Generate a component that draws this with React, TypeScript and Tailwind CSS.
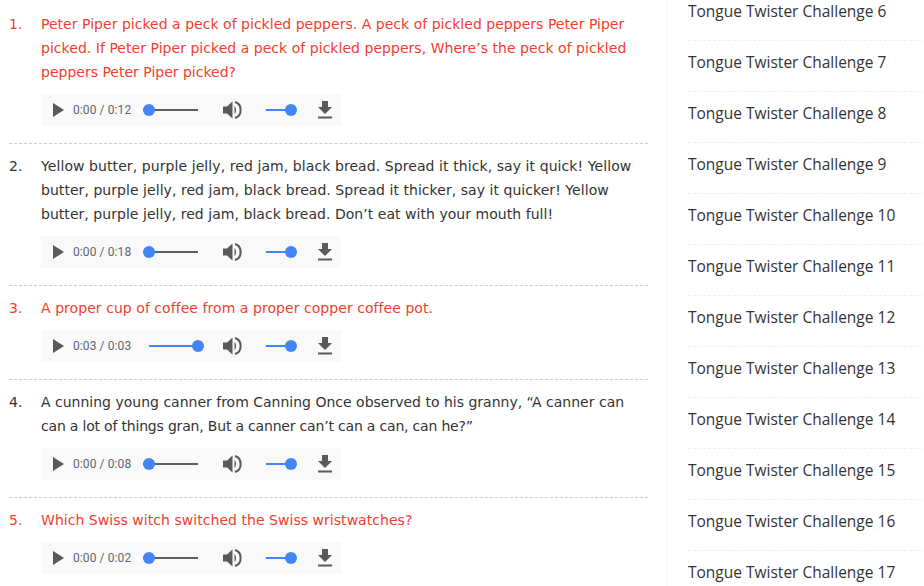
const items = [
  {
    n: 1,
    red: true,
    lines: [
      { t: "Peter Piper picked a peck of pickled peppers. A peck of pickled peppers Peter Piper", c: "tracking-[0.024px]" },
      { t: "picked. If Peter Piper picked a peck of pickled peppers, Where’s the peck of pickled", c: "tracking-[0.036px]" },
      { t: "peppers Peter Piper picked?", c: "" },
    ],
    time: "0:00 / 0:12",
    done: false,
  },
  {
    n: 2,
    red: false,
    lines: [
      { t: "Yellow butter, purple jelly, red jam, black bread. Spread it thick, say it quick! Yellow", c: "tracking-[0.08px]" },
      { t: "butter, purple jelly, red jam, black bread. Spread it thicker, say it quicker! Yellow", c: "tracking-[0.05px]" },
      { t: "butter, purple jelly, red jam, black bread. Don’t eat with your mouth full!", c: "tracking-[0.04px]" },
    ],
    time: "0:00 / 0:18",
    done: false,
  },
  {
    n: 3,
    red: true,
    lines: [{ t: "A proper cup of coffee from a proper copper coffee pot.", c: "tracking-[0.055px]" }],
    time: "0:03 / 0:03",
    done: true,
  },
  {
    n: 4,
    red: false,
    lines: [
      { t: "A cunning young canner from Canning Once observed to his granny, “A canner can", c: "" },
      { t: "can a lot of things gran, But a canner can’t can a can, can he?”", c: "tracking-[-0.19px]" },
    ],
    time: "0:00 / 0:08",
    done: false,
  },
  {
    n: 5,
    red: true,
    lines: [{ t: "Which Swiss witch switched the Swiss wristwatches?", c: "tracking-[0.04px]" }],
    time: "0:00 / 0:02",
    done: false,
  },
];

const challenges = [6, 7, 8, 9, 10, 11, 12, 13, 14, 15, 16, 17];

const AudioBar = ({ time, done }: { time: string; done: boolean }) => (
  <div className="flex items-center h-8 w-[300px] bg-[#f9f9f9] mt-[10px]">
    <svg className="ml-3 shrink-0" width="11" height="14" viewBox="0 0 11 14">
      <path d="M0 0L11 7L0 14Z" fill="#5a5a5a" />
    </svg>
    <span className="ml-[9px] w-[58px] shrink-0 text-[12px] tracking-[0.1px] text-[#5f6672] whitespace-nowrap font-['Roboto',sans-serif]">
      {time}
    </span>
    <div className={done ? "ml-[18px] w-[55px] shrink-0 relative h-3 flex items-center" : "ml-3 w-[55px] shrink-0 relative h-3 flex items-center"}>
      <div className={done ? "h-[2px] w-full bg-[#4285f4]" : "h-[2px] w-full bg-[#5f5f5f]"} />
      <div className={done ? "absolute right-0 w-3 h-3 rounded-full bg-[#4285f4]" : "absolute left-0 w-3 h-3 rounded-full bg-[#4285f4]"} />
    </div>
    <svg className={done ? "ml-[19px] shrink-0" : "ml-[25px] shrink-0"} width="19" height="20" viewBox="0 0 19 20">
      <path d="M0 6.5H4L9.5 1.5V18.5L4 13.5H0Z" fill="#5a5a5a" />
      <path d="M11.5 6C13.5 7.5 13.5 12.5 11.5 14Z" fill="#5a5a5a" />
      <path d="M12 2C19.5 4 19.5 16 12 18" fill="none" stroke="#5a5a5a" strokeWidth="2" />
    </svg>
    <div className="ml-[24px] w-[31px] shrink-0 relative h-3 flex items-center">
      <div className="h-[2px] w-[20px] bg-[#4285f4]" />
      <div className="absolute right-0 w-3 h-3 rounded-full bg-[#4285f4]" />
    </div>
    <svg className="ml-[21px] shrink-0" width="14" height="18" viewBox="0 0 14 18">
      <path d="M4 0H10V6H14L7 13L0 6H4Z" fill="#5a5a5a" />
      <rect x="0" y="15.5" width="14" height="2" fill="#5a5a5a" />
    </svg>
  </div>
);

export default function App() {
  return (
    <div className="h-[586px] w-[924px] overflow-hidden bg-white flex font-['DejaVu_Sans',sans-serif]">
      <div className="w-[667px] shrink-0 pl-[9px] pt-[12px]">
        {items.map((item, i) => (
          <div
            key={item.n}
            className={i === items.length - 1 ? "" : "border-b border-dashed border-[#cccccc] mb-[10px] pb-[17px] w-[639px]"}
          >
            <div className="flex">
              <div className={item.red ? "w-8 shrink-0 text-[14px] leading-6 text-[#f0402f]" : "w-8 shrink-0 text-[14px] leading-6 text-[#333333]"}>
                {item.n}.
              </div>
              <div>
                {item.lines.map((l) => (
                  <div
                    key={l.t}
                    className={`text-[14px] leading-6 whitespace-nowrap ${item.red ? "text-[#f0402f]" : "text-[#333333]"} ${l.c}`}
                  >
                    {l.t}
                  </div>
                ))}
                <AudioBar time={item.time} done={item.done} />
              </div>
            </div>
          </div>
        ))}
      </div>
      <div className="flex-1 border-l border-[#f5f5f5] pl-5 pr-[2px] -mt-[10px]">
        {challenges.map((c) => (
          <div
            key={c}
            className="h-[51px] border-b border-dashed border-[#eeeeee] pt-[11px] text-[15.5px] leading-5 text-[#333333] font-['Open_Sans',sans-serif] whitespace-nowrap"
          >
            Tongue Twister Challenge {c}
          </div>
        ))}
      </div>
    </div>
  );
}
